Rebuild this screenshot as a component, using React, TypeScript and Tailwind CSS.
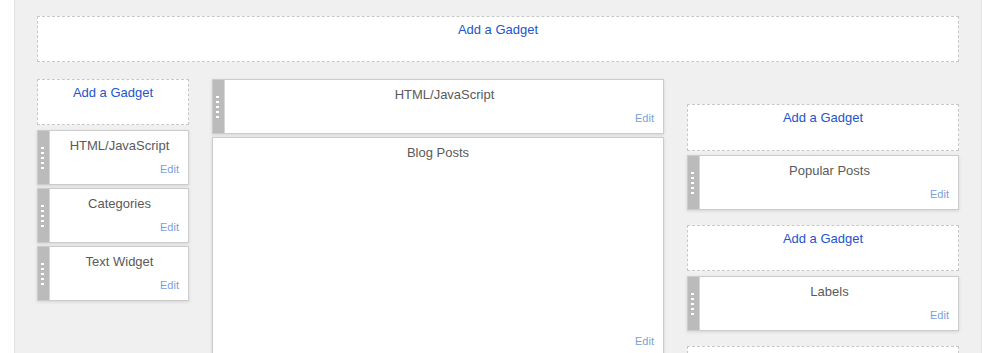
import React from 'react';

const AddGadget = ({ className = '' }: { className?: string }) => (
  <div
    className={`border border-dashed border-[#c8c8c8] bg-white text-center text-[13px] leading-[16px] ${className}`}
  >
    <a className="cursor-pointer text-[#2255cc]">Add a Gadget</a>
  </div>
);

const Handle = () => (
  <div className="flex w-[11px] shrink-0 flex-col items-center justify-center gap-[3px] bg-[#bbbbbb] pr-[2px]">
    {[0, 1, 2, 3, 4].map((i) => (
      <span key={i} className="block h-[2px] w-[3px] bg-white" />
    ))}
  </div>
);

const Widget = ({ title, className = '' }: { title: string; className?: string }) => (
  <div
    className={`flex h-[55px] border border-[#cccccc] bg-white shadow-[0_1px_3px_rgba(0,0,0,0.12)] ${className}`}
  >
    <Handle />
    <div className="flex flex-1 flex-col border-l border-[#d6d6d6] pl-px">
      <div className="pt-[7px] text-center text-[13px] leading-[16px] text-[#5a5a5a]">{title}</div>
      <div className="mt-auto pb-[8px] pr-[9px] text-right text-[11px] leading-[14px] text-[#7a9fd9]">
        Edit
      </div>
    </div>
  </div>
);

export default function App() {
  return (
    <div className="h-[353px] w-full overflow-hidden bg-white font-['Liberation_Sans',Arial,sans-serif]">
      <div className="ml-[14px] h-full w-[968px] border-x border-[#e4e4e4] bg-[#f0f0f0] px-[22px] pt-[16px]">
        <AddGadget className="h-[46px] pt-[5px]" />

        <div className="mt-[17px] flex gap-[23px]">
          {/* left sidebar */}
          <div className="flex w-[152px] flex-col">
            <AddGadget className="h-[46px] pt-[5px]" />
            <Widget title="HTML/JavaScript" className="mt-[5px]" />
            <Widget title="Categories" className="mt-[3px]" />
            <Widget title="Text Widget" className="mt-[3px]" />
          </div>

          {/* main */}
          <div className="flex w-[452px] flex-col">
            <Widget title="HTML/JavaScript" />
            <div className="mt-[3px] flex h-[220px] flex-col border border-[#cccccc] bg-white shadow-[0_1px_3px_rgba(0,0,0,0.12)]">
              <div className="pt-[7px] text-center text-[13px] leading-[16px] text-[#5a5a5a]">Blog Posts</div>
              <div className="mt-auto pb-[8px] pr-[9px] text-right text-[11px] leading-[14px] text-[#7a9fd9]">
                Edit
              </div>
            </div>
          </div>

          {/* right sidebar */}
          <div className="flex w-[272px] flex-col pt-[25px]">
            <AddGadget className="h-[47px] pt-[5px]" />
            <Widget title="Popular Posts" className="mt-[4px]" />
            <AddGadget className="mt-[15px] h-[46px] pt-[5px]" />
            <Widget title="Labels" className="mt-[5px]" />
            <AddGadget className="mt-[15px] h-[46px] pt-[5px]" />
          </div>
        </div>
      </div>
    </div>
  );
}
